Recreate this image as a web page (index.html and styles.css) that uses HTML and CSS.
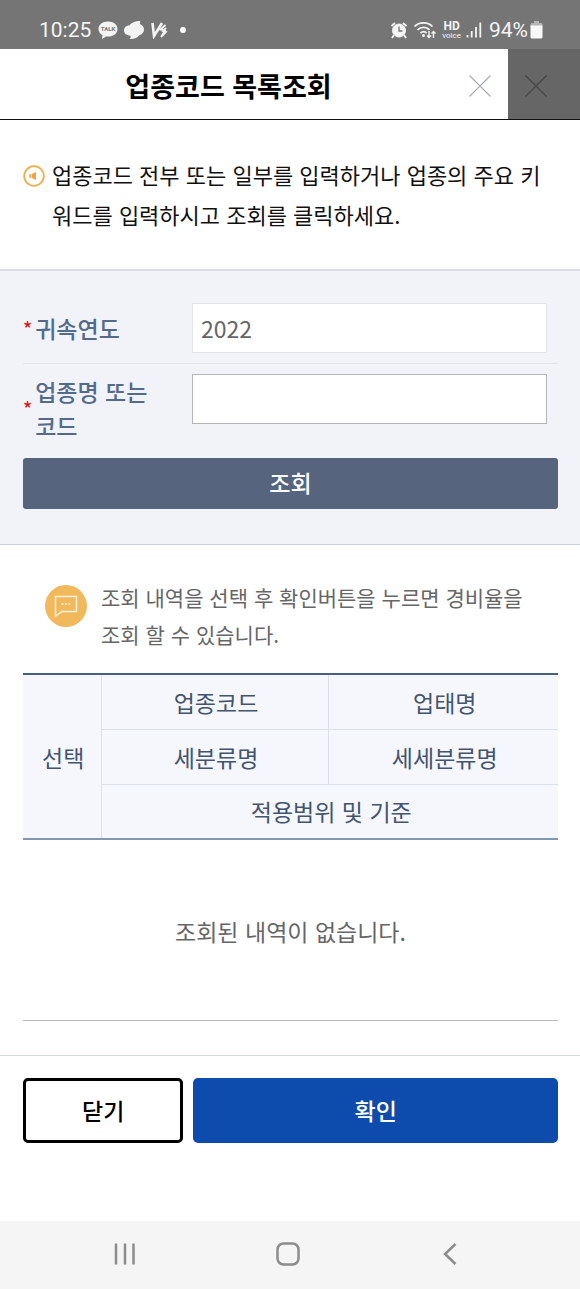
FILE: index.html
```html
<!DOCTYPE html>
<html lang="ko">
<head>
    <meta charset="UTF-8">
    <meta name="viewport" content="width=device-width, initial-scale=1.0">
    <title>업종코드 목록조회</title>
    <link rel="stylesheet" href="styles.css">
</head>
<body>
    <div class="status-bar">
        <div class="status-group">
            <span class="clock">10:25</span>
            <svg width="20" height="20" viewBox="0 0 20 20">
                <path d="M10 1.500C4.500 1.500.5 4.500.5 9c0 2.700 1.500 4.900 4 6.200L4 19l4-2.500c7 .8 11.500-2.700 11.500-7.500 0-4.500-4-7.500-9.500-7.500z" fill="#f4f4f4"/>
                <text class="talk-text" x="10" y="11" text-anchor="middle">TALK</text>
            </svg>
            <svg width="22" height="20" viewBox="0 0 22 20">
                <path d="M17 1c.4 1 .2 2 -.3 3C19.500 5 21 7 21 9.600c0 3-2 5-4.800 5.600-1.700 2.600-5.200 4.200-9.700 3.800 1.200-.8 1.500-2 1-3.200C3.800 15.800 1 13.600 1 10.600 1 7.500 3.500 5.600 6.500 5.300 8.500 2.500 12.500.8 17 1z" fill="#f4f4f4"/>
            </svg>
            <svg width="18" height="18" viewBox="0 0 18 18" fill="none" stroke="#f4f4f4">
                <path d="M2.500 2l1.500 13L12 2" stroke-width="2.600"/>
                <path d="M15.500 4l-5 4.500 4.500 1-4 6.500M16 7l-3 3 3 1-5 5" stroke-width="1.800"/>
            </svg>
            <span class="dot"></span>
        </div>
        <div class="status-group status-right">
            <svg width="18" height="18" viewBox="0 0 18 18" fill="none" stroke="#f4f4f4">
                <circle cx="9" cy="9.500" r="6.500" fill="#f4f4f4"/>
                <path d="M1.500 5L5 2M16.500 5L13 2M4 14l-2 3M14 14l2 3" stroke-width="1.800"/>
                <path d="M9 5.500v4.500h3.500" stroke="#757575" stroke-width="1.300"/>
            </svg>
            <svg width="24" height="18" viewBox="0 0 24 18" fill="none" stroke="#f4f4f4" stroke-width="1.800">
                <path d="M1.500 5.500C6 .6 15 .6 19.500 5.500M4.500 9c3.200-3.600 9-3.600 12 0M7.500 12.200c2-2 4.500-2 6 0"/>
                <circle cx="10.500" cy="14.500" r=".6" fill="#f4f4f4"/>
                <path d="M16 10v6.500M14 14.500l2 2 2-2M20.500 17v-6.500M18.500 12.500l2-2 2 2" stroke-width="1.400"/>
            </svg>
            <span class="hd"><b>HD</b><small>voice</small></span>
            <svg width="16" height="17" viewBox="0 0 16 17" fill="none" stroke="#f4f4f4" stroke-width="1.800">
                <path d="M1.500 14v2.500M5.700 10v6.500M10 6v10.500M14.300 1.500v15"/>
            </svg>
            <span class="battery">
                <span>94%</span>
                <svg width="13" height="18" viewBox="0 0 13 18">
                    <path d="M4 0h5v3H4zM2 2h9a1.500 1.500 0 0 1 1.500 1.500V6H.5V3.500A1.500 1.500 0 0 1 2 2z" fill="#b5b5b5"/>
                    <path d="M.5 4.500h12V16a1.500 1.500 0 0 1-1.500 1.500H2A1.500 1.500 0 0 1 .5 16z" fill="#f8f8f8"/>
                </svg>
            </span>
        </div>
    </div>

    <header class="header">
        <h1>업종코드 목록조회</h1>
        <button class="close-button" type="button" aria-label="닫기">
            <svg width="24" height="24" viewBox="0 0 24 24" stroke="#a9acb5" stroke-width="1.200"><path d="M1.500 1.500l21 21M22.500 1.500l-21 21"/></svg>
        </button>
        <button class="close-button dark" type="button" aria-label="창 닫기">
            <svg width="24" height="24" viewBox="0 0 24 24" stroke="#454545" stroke-width="1.200"><path d="M1.500 1.500l21 21M22.500 1.500l-21 21"/></svg>
        </button>
    </header>

    <main>
        <div class="guide">
            <svg class="guide-icon" width="22" height="22" viewBox="0 0 22 22">
                <circle cx="11" cy="11" r="9.800" fill="none" stroke="#eeb04f" stroke-width="1.800"/>
                <path d="M8.500 9.200l4.500-2.400v8.400l-4.500-2.400z" fill="#f0a43c"/>
                <path d="M7 9v4" stroke="#f0a43c" stroke-width="1.500"/>
            </svg>
            <p>업종코드 전부 또는 일부를 입력하거나 업종의 주요 키워드를 입력하시고 조회를 클릭하세요.</p>
        </div>

        <form class="search">
            <div class="field">
                <label for="year"><span class="required">*</span><span>귀속연도</span></label>
                <input id="year" type="text" value="2022" readonly>
            </div>
            <div class="field">
                <label for="keyword"><span class="required">*</span><span>업종명 또는 코드</span></label>
                <input id="keyword" type="text">
            </div>
            <button class="search-button" type="button">조회</button>
        </form>

        <section class="result">
            <div class="hint">
                <svg class="hint-icon" width="42" height="42" viewBox="0 0 42 42" fill="none">
                    <circle cx="21" cy="21" r="21" fill="#f2b95c"/>
                    <path d="M10.500 11.500h21v15H17l-6.500 4.500z" stroke="#fff3dc" stroke-width="1.500"/>
                    <path d="M16.500 19h2M20 19h2M23.500 19h2" stroke="#fff3dc" stroke-width="1.500"/>
                </svg>
                <p>조회 내역을 선택 후 확인버튼을 누르면 경비율을 조회 할 수 있습니다.</p>
            </div>
            <table>
                <colgroup>
                    <col class="col-select">
                    <col class="col-code">
                    <col>
                </colgroup>
                <thead>
                    <tr>
                        <th rowspan="3">선택</th>
                        <th>업종코드</th>
                        <th>업태명</th>
                    </tr>
                    <tr>
                        <th>세분류명</th>
                        <th>세세분류명</th>
                    </tr>
                    <tr>
                        <th colspan="2">적용범위 및 기준</th>
                    </tr>
                </thead>
                <tbody>
                    <tr>
                        <td colspan="3">조회된 내역이 없습니다.</td>
                    </tr>
                </tbody>
            </table>
        </section>

        <div class="actions">
            <button class="cancel" type="button">닫기</button>
            <button class="confirm" type="button">확인</button>
        </div>
    </main>

    <nav class="nav-bar">
        <button type="button" aria-label="최근 앱">
            <svg width="24" height="24" viewBox="0 0 24 24"><path d="M3 1.500v21M12 1.500v21M20.500 1.500v21"/></svg>
        </button>
        <button type="button" aria-label="홈">
            <svg width="24" height="24" viewBox="0 0 24 24"><rect x="1.500" y="1.500" width="21" height="21" rx="6"/></svg>
        </button>
        <button type="button" aria-label="뒤로">
            <svg width="24" height="24" viewBox="0 0 24 24"><path d="M17.500 2L7 12l10.500 10"/></svg>
        </button>
    </nav>
</body>
</html>
```
FILE: styles.css
```css
* {
    box-sizing: border-box;
}
body {
    font-family: 'Noto Sans CJK KR', sans-serif;
    font-size: 23px;
    margin: 0;
    min-height: 100vh;
    display: flex;
    flex-direction: column;
    background: #fff;
    color: #111;
}
h1, p {
    margin: 0;
}
button {
    font-family: inherit;
    font-size: 23px;
    font-weight: 500;
    padding: 0;
    border: none;
    cursor: pointer;
}
svg {
    display: block;
    flex-shrink: 0;
}

/* status bar */
.status-bar {
    display: flex;
    justify-content: space-between;
    height: 49px;
    padding: 10px 37px 0 39px;
    background: #757575;
    color: #f4f4f4;
    font-family: Roboto, sans-serif;
    font-size: 21px;
}
.status-group {
    display: flex;
    align-items: center;
    gap: 5px;
}
.clock {
    margin-right: 2px;
}
.talk-text {
    font-size: 6px;
    font-weight: 700;
    fill: #757575;
}
.dot {
    width: 6px;
    height: 6px;
    margin-left: 7px;
    border-radius: 50%;
    background: #fff;
}
.hd {
    display: flex;
    flex-direction: column;
    align-items: center;
}
.hd b {
    font-size: 12px;
    line-height: 12px;
}
.hd small {
    font-size: 8px;
    line-height: 8px;
}
.battery {
    display: flex;
    align-items: center;
    gap: 2px;
    margin-left: 2px;
}

/* header */
.header {
    display: flex;
    height: 71px;
    border-bottom: 1px solid #111;
}
.header h1 {
    flex: 1;
    padding: 3px 0 0 5px;
    font-size: 27px;
    font-weight: 700;
    line-height: 67px;
    text-align: center;
    color: #000;
}
.close-button {
    display: flex;
    align-items: center;
    justify-content: center;
    width: 56px;
    padding-top: 4px;
    background: #fff;
}
.close-button.dark {
    justify-content: flex-start;
    width: 72px;
    padding-left: 16px;
    background: #666;
}

/* guide */
.guide {
    display: flex;
    gap: 7px;
    padding: 34px 23px 35px;
    font-size: 22px;
    line-height: 40px;
    border-bottom: 2px solid #d9dce8;
}
.guide-icon {
    margin-top: 11px;
}

/* search form */
.search {
    padding: 32px 22px 35px 23px;
    background: #f2f3f9;
    border-bottom: 1px solid #c9d2dd;
}
.field {
    display: flex;
    align-items: flex-start;
    padding-bottom: 10px;
    border-bottom: 1px solid #e3e5eb;
}
.field + .field {
    padding: 10px 0 0;
    border-bottom: none;
}
.field label {
    display: flex;
    align-items: center;
    gap: 3px;
    width: 169px;
    min-height: 50px;
    padding-right: 30px;
    color: #536a8b;
    font-weight: 500;
    line-height: 34px;
}
.required {
    color: #e02020;
    font-size: 19px;
}
.field input {
    flex: 1;
    min-width: 0;
    height: 50px;
    margin-right: 11px;
    padding: 0 8px;
    border: 1px solid #b4b6bc;
    border-radius: 0;
    background: #fff;
    color: #666;
    font-family: inherit;
    font-size: 23px;
}
.field input[readonly] {
    border-color: #e3e5e8;
}
.search-button {
    display: block;
    width: 100%;
    height: 51px;
    margin-top: 16px;
    padding-bottom: 4px;
    border-radius: 3px;
    background: #57647d;
    color: #fff;
}

/* result */
.result {
    padding: 34px 22px 34px 23px;
    border-bottom: 1px solid #d3d9dc;
}
.hint {
    display: flex;
    gap: 14px;
    padding: 0 14px 20px 22px;
    color: #666;
    font-size: 21px;
    line-height: 37px;
}
.hint-icon {
    margin-top: 6px;
}
table {
    width: 100%;
    table-layout: fixed;
    border-collapse: collapse;
    border-top: 2px solid #486080;
}
.col-select {
    width: 78px;
}
.col-code {
    width: 227px;
}
th {
    height: 55px;
    padding: 0 0 0 3px;
    background: #f5f7fc;
    border: 1px solid #dbe0e9;
    border-width: 0 0 1px 1px;
    color: #43546f;
    font-weight: 400;
}
th:first-child[rowspan] {
    border-left: none;
}
thead {
    border-bottom: 2px solid #8298b2;
}
td {
    height: 181px;
    padding: 3px 0 0;
    border-bottom: 1px solid #b9bbbc;
    color: #666;
    text-align: center;
}

/* bottom buttons */
.actions {
    display: grid;
    grid-template-columns: 11fr 25fr;
    gap: 10px;
    padding: 22px 22px 24px 23px;
}
.actions button {
    height: 65px;
    border-radius: 5px;
}
.cancel {
    border: 3px solid #000;
    background: #fff;
    color: #000;
}
.confirm {
    background: #0d4cac;
    color: #fff;
}

/* navigation bar */
.nav-bar {
    display: flex;
    justify-content: space-between;
    align-items: center;
    height: 68px;
    margin-top: auto;
    padding: 0 118px 3px 113px;
    background: #f5f5f5;
}
.nav-bar button {
    background: none;
}
.nav-bar svg {
    fill: none;
    stroke: #8c8c8c;
    stroke-width: 2.5;
}
```
